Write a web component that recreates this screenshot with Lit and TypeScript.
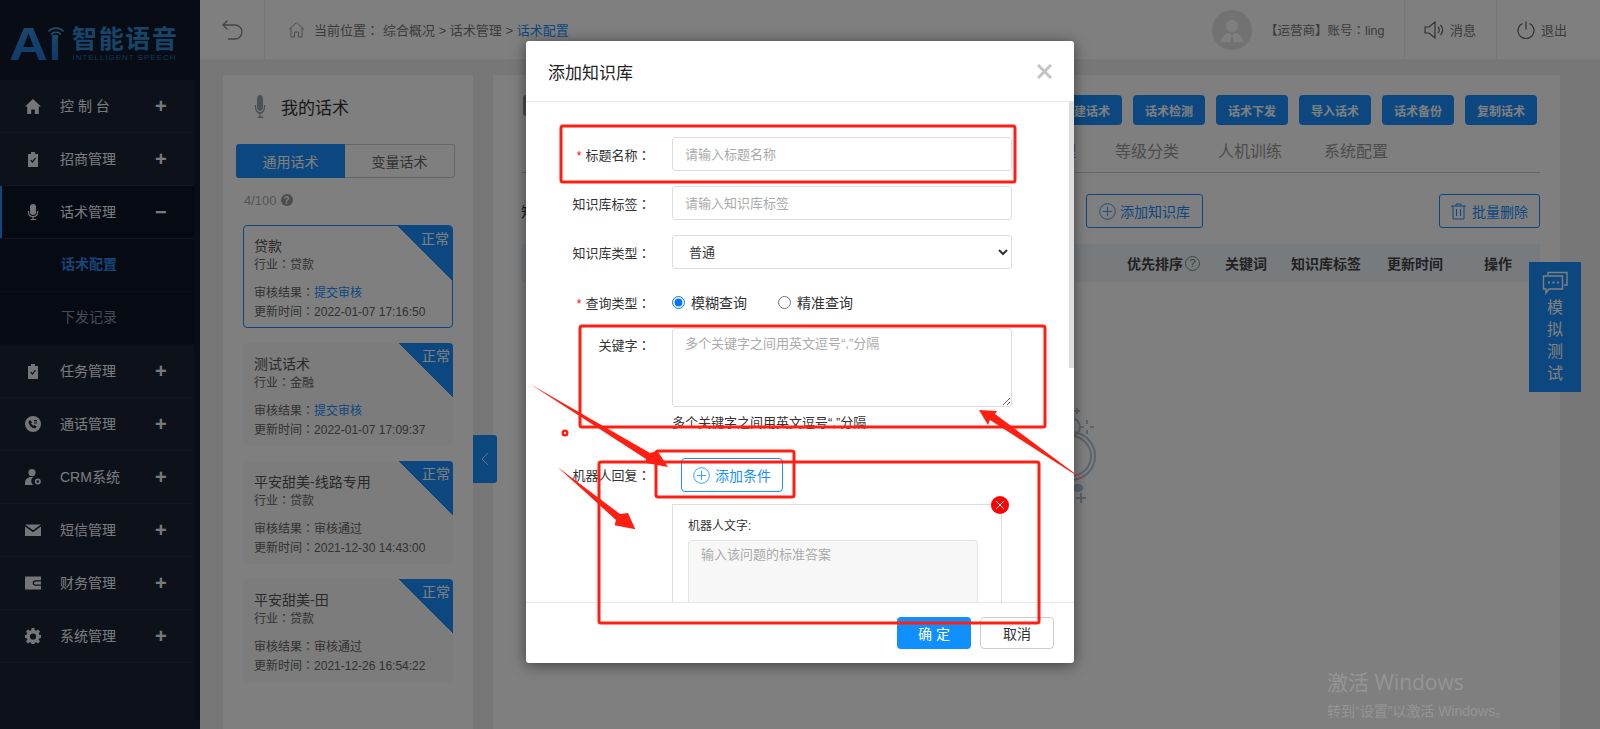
import { LitElement, html, css, svg } from "lit";
import { customElement } from "lit/decorators.js";

const icons: Record<string, unknown> = {
  home: svg`<path d="M8 1 0 8.500h2.200V16h4v-4.500h3.600V16h4V8.500H16z"/>`,
  clip: svg`<path d="M6 1h4v2h3v13H3V3h3zM5.200 9.600l2.200 2.400 3.600-4.400-1-.8-2.700 3.200-1.200-1.300z" fill-rule="evenodd"/>`,
  mic: svg`<path d="M8 0a3 3 0 0 1 3 3v5a3 3 0 0 1-6 0V3a3 3 0 0 1 3-3zM2.800 7h1.300v1a3.900 3.900 0 0 0 7.800 0V7h1.300v1a5.200 5.200 0 0 1-4.600 5.200V15h2.600v1H5.800v-1h1.600v-1.800A5.200 5.200 0 0 1 2.800 8z"/>`,
  phone: svg`<path fill-rule="evenodd" d="M8 0a8 8 0 1 1 0 16A8 8 0 0 1 8 0zM5 4 3.600 5.400c-.3 3.400 3.300 7 6.800 6.800l1.400-1.600-2.300-1.700-1 .8C7.400 9.200 6.600 8.400 6.100 7.200l.9-.9zM9 4v1.200h3V4zm0 2.400v1.200h3V6.400z"/>`,
  user: svg`<path fill-rule="evenodd" d="M7 0a3.600 3.600 0 1 1 0 7.200A3.600 3.600 0 0 1 7 0zM0 14c0-3.500 2.600-6 6-6h2.200A5 5 0 0 0 8.200 16H0zM12.800 9.500a3 3 0 1 1 0 6 3 3 0 0 1 0-6zm0 1.700a1.300 1.300 0 1 0 0 2.600 1.300 1.300 0 0 0 0-2.600z"/>`,
  mail: svg`<path d="M0 2.500h16L8 8.300zM0 4.500V14h16V4.500L8 10.300z"/>`,
  wallet: svg`<path fill-rule="evenodd" d="M0 1.500h16v3.700h-5.500a2.800 2.800 0 0 0 0 5.600H16v3.700H0zM10.500 6.500H16v3h-5.500a1.500 1.500 0 0 1 0-3z"/>`,
  gear: svg`<path fill-rule="evenodd" d="M6.600 0h2.800l.4 2.200 1.300.6 1.900-1.300 2 2-1.300 1.900.6 1.300 2.200.4v2.800l-2.200.4-.6 1.300 1.300 1.900-2 2-1.900-1.300-1.300.6-.4 2.200H6.600l-.4-2.200-1.300-.6L3 15.500l-2-2 1.300-1.900-.6-1.300L-.5 9.900V7.100l2.200-.4.6-1.300L1 3.500l2-2 1.900 1.300 1.300-.6zM8 5.400a3.100 3.100 0 1 0 0 6.200 3.100 3.100 0 0 0 0-6.200z"/>`,
};

const menu = [
  { name: "控 制 台", icon: "home", sign: "+" },
  { name: "招商管理", icon: "clip", sign: "+" },
  { name: "话术管理", icon: "mic", sign: "−", active: true },
  { sub: "话术配置", on: true },
  { sub: "下发记录" },
  { name: "任务管理", icon: "clip", sign: "+" },
  { name: "通话管理", icon: "phone", sign: "+" },
  { name: "CRM系统", icon: "user", sign: "+" },
  { name: "短信管理", icon: "mail", sign: "+" },
  { name: "财务管理", icon: "wallet", sign: "+" },
  { name: "系统管理", icon: "gear", sign: "+" },
];

const cards = [
  { t: "贷款", ind: "贷款", res: "提交审核", link: true, time: "2022-01-07 17:16:50", sel: true },
  { t: "测试话术", ind: "金融", res: "提交审核", link: true, time: "2022-01-07 17:09:37" },
  { t: "平安甜美-线路专用", ind: "贷款", res: "审核通过", time: "2021-12-30 14:43:00" },
  { t: "平安甜美-田", ind: "贷款", res: "审核通过", time: "2021-12-26 16:54:22" },
];

const FONT = css`"Liberation Sans", "Noto Sans CJK SC", sans-serif`;
const colon = html`<span class="col">：</span>`;

@customElement("app-root")
export class AppRoot extends LitElement {
  static styles = css`
    :host { display: block; position: relative; width: 1600px; height: 729px; overflow: hidden; font-family: ${FONT}; background: #eee; color: #333; }
    * { box-sizing: border-box; }
    .col { font-family: "Noto Sans CJK TC", sans-serif; }
    .page { display: flex; height: 729px; }
    aside { width: 200px; flex: none; background: #1b2234; }
    .logo { height: 80px; background: #101829; display: block; }
    .logo svg { display: block; }
    .menu { height: 640px; border-right: 6px solid #131a2b; }
    .item { height: 53px; display: flex; align-items: center; border-bottom: 1px solid #232b3e; color: #f2f5fb; font-size: 14px; padding-left: 25px; }
    .item.active { background: #0d1526; box-shadow: inset 2px 0 0 #1890ff; }
    .item svg { width: 16px; height: 16px; fill: #e8ecf4; flex: none; }
    .item .nm { margin: 0 0 2px 19px; flex: 1; }
    .item .sign { width: 39px; font-size: 20px; font-weight: 700; color: #f0f2f7; line-height: 1; }
    .sub { height: 53px; display: flex; align-items: center; padding: 0 0 4px 61px; font-size: 14px; color: #8d94a3; background: #0d1526; border-bottom: 1px solid #141c2f; }
    .sub.on { color: #2a8cf0; font-weight: 700; }
    .main { flex: 1; display: flex; flex-direction: column; min-width: 0; }
    header { height: 60px; flex: none; background: #fff; display: flex; align-items: center; font-size: 13px; color: #777; border-bottom: 1px solid #f2f2f2; }
    .back { width: 65px; height: 60px; display: flex; align-items: center; justify-content: center; border-right: 1px solid #eee; }
    .crumb { display: flex; align-items: center; margin-left: 23px; flex: 1; }
    .crumb svg { margin-right: 9px; }
    .crumb b { font-weight: 400; color: #1890ff; }
    .crumb .col { margin-right: 4px; }
    .avatar { width: 40px; height: 40px; border-radius: 50%; background: #e4e4e4; display: flex; align-items: center; justify-content: center; margin-right: 13px; overflow: hidden; }
    .acct { width: 139px; white-space: nowrap; font-size: 12.500px; }
    .hbtn { height: 60px; display: flex; align-items: center; border-left: 1px solid #eee; gap: 6px; padding-left: 19px; width: 92px; }
    .hbtn.last { width: 104px; padding-left: 20px; }
    .content { flex: 1; display: flex; gap: 20px; padding: 15px 40px 0 23px; min-height: 0; }
    .left { width: 250px; flex: none; background: #fff; position: relative; }
    .ltitle { display: flex; align-items: center; height: 34px; margin: 14px 0 0 29px; gap: 13px; font-size: 17px; color: #333; }
    .seg { display: flex; width: 219px; height: 34px; margin: 21px 0 0 13px; font-size: 14px; }
    .seg div { flex: 1; display: flex; align-items: center; justify-content: center; border: 1px solid #ccc; border-left: 0; border-radius: 0 3px 3px 0; color: #666; }
    .seg div.on { background: #1890ff; border: 0; color: #fff; border-radius: 3px 0 0 3px; }
    .count { display: flex; align-items: center; height: 18px; margin: 13px 0 0 21px; gap: 4px; font-size: 13px; color: #aaa; }
    .qm { width: 12px; height: 12px; border-radius: 50%; background: #999; color: #fff; font-size: 10px; font-weight: 700; display: flex; align-items: center; justify-content: center; }
    .cards { display: flex; flex-direction: column; gap: 15px; margin: 16px 0 0 20px; width: 210px; }
    .card { height: 103px; background: #f8f8f8; border-radius: 4px; position: relative; overflow: hidden; padding: 12px 11px; font-size: 12px; line-height: 17px; color: #666; }
    .card.sel { border: 1px solid #1890ff; background: #fff; padding: 11px 10px; }
    .card h4 { margin: 0; font-weight: 400; font-size: 14px; line-height: 18px; color: #555; }
    .card p { margin: 0; }
    .card .ind { margin-bottom: 9px; }
    .card .link { color: #1890ff; }
    .tri { position: absolute; top: 0; right: 0; width: 54px; height: 54px; background: linear-gradient(to top right, transparent 50%, #1890ff 50%); }
    .tri span { position: absolute; top: 3px; right: 3px; font-size: 14px; line-height: 20px; color: #fff; }
    .collapse { position: absolute; left: 250px; top: 360px; width: 24px; height: 48px; background: #1890ff; border-radius: 0 3px 3px 0; display: flex; align-items: center; justify-content: center; }
    .right { flex: 1; background: #fff; padding: 20px 20px 0 28px; min-width: 0; }
    .tools { display: flex; height: 30px; gap: 11px; padding-right: 3px; }
    .stub { width: 100px; height: 21px; margin-left: 2px; background: #999; border-radius: 3px; margin-right: auto; }
    .tools button { width: 72px; height: 30px; border: 0; border-radius: 4px; background: #1890ff; color: #fff; font: 700 12px ${FONT}; padding: 0; }
    .tabs { display: flex; gap: 39px; height: 48px; padding: 2px 0 0 475px; align-items: center; border-bottom: 1px solid #ccc; font-size: 16px; color: #999; }
    .tabs span:nth-child(3) { margin-right: 3px; }
    .filter { display: flex; align-items: center; height: 34px; margin-top: 21px; font-size: 14px; color: #333; }
    .filter > span { margin-right: auto; }
    .obtn { height: 34px; display: flex; align-items: center; justify-content: center; gap: 4px; border: 1px solid #1890ff; border-radius: 3px; color: #1890ff; font-size: 14px; }
    .obtn.add { width: 117px; margin-right: 236px; }
    .obtn.del { width: 101px; gap: 6px; }
    .thead { display: grid; grid-template-columns: 1fr 98px 66px 96px 97px 56px; height: 38px; margin-top: 16px; align-items: center; background: #eef7fd; font-size: 14px; font-weight: 700; color: #444; }
    .thead > div:nth-child(2) { display: flex; align-items: center; gap: 2px; }
    .qo { width: 15px; height: 15px; border: 1px solid #888; border-radius: 50%; color: #777; font-size: 11px; font-weight: 400; display: flex; align-items: center; justify-content: center; }
    .empty { display: block; margin: 123px 0 0 519px; }
    .sim { position: absolute; left: 1529px; top: 262px; width: 52px; height: 130px; background: #1890ff; color: #fff; display: flex; flex-direction: column; align-items: center; font-size: 16px; line-height: 22px; padding-top: 9px; }
    .sim svg { margin-bottom: 2px; }
    .mask { position: absolute; inset: 0; background: rgba(0, 0, 0, 0.5); }
    .wm { position: absolute; left: 1327px; top: 667px; color: #959595; }
    .wm div:first-child { font-size: 21px; line-height: 30px; font-family: "Open Sans", "Noto Sans CJK SC", sans-serif; }
    .wm div:last-child { font-size: 14px; line-height: 20px; margin-top: 4px; }
    .modal { position: absolute; left: 526px; top: 41px; width: 548px; height: 622px; background: #fff; border-radius: 3px; box-shadow: 0 2px 14px rgba(0, 0, 0, 0.5); display: flex; flex-direction: column; }
    .mh { height: 61px; flex: none; display: flex; align-items: center; justify-content: space-between; padding: 0 22px; border-bottom: 1px solid #e8e8e8; font-size: 17px; color: #222; }
    .body { flex: 1; overflow: hidden; position: relative; padding-top: 35px; min-height: 0; }
    .bar { position: absolute; right: 0; top: 0; width: 5px; height: 266px; background: #ddd; }
    .row { display: grid; grid-template-columns: 124.500px 340px; column-gap: 21.500px; font-size: 13px; color: #333; align-items: center; }
    .row + .row { margin-top: 15px; }
    .lb { text-align: right; white-space: nowrap; }
    .lb i { color: #f00; font-style: normal; font-size: 12px; margin-right: 4px; }
    .ctl { width: 340px; height: 34px; border: 1px solid #ddd; border-radius: 3px; background: #fff; padding: 0 12px; font: 13px ${FONT}; color: #333; outline: none; display: block; }
    .ctl::placeholder, textarea::placeholder { color: #aaa; opacity: 1; }
    .radios { display: flex; align-items: center; height: 34px; font-size: 14px; }
    .radios input { margin: 0 6px 0 0; width: 13px; height: 13px; }
    .radios label { display: flex; align-items: center; margin-right: 31px; }
    .row.kw { margin-top: 9px; align-items: start; }
    .row.kw .lb { padding-top: 7px; }
    .row.kw textarea { height: 79px; padding: 4px 12px; }
    .hint { font-size: 13px; line-height: 20px; margin-top: 6px; color: #333; }
    .row.rb { margin-top: 25px; }
    .row.rb .lb { padding-bottom: 2px; }
    .cond { width: 102px; height: 34px; margin-left: 9px; display: flex; align-items: center; justify-content: center; gap: 5px; border: 1px solid #1890ff; border-radius: 4px; color: #1890ff; font-size: 14px; }
    .answer { margin: 12px 0 0 146px; width: 330px; height: 240px; border: 1px solid #ddd; border-bottom: 0; padding: 11px 15px 0; position: relative; font-size: 12px; color: #333; }
    .answer textarea { display: block; width: 290px; height: 200px; margin-top: 7px; border: 1px solid #e4e4e4; border-radius: 3px; background: #f7f7f7; padding: 3px 12px; font: 13px ${FONT}; resize: none; outline: none; }
    .xdot { position: absolute; right: -8px; top: -9px; width: 18px; height: 18px; }
    .mf { height: 61px; flex: none; border-top: 1px solid #e8e8e8; display: flex; justify-content: flex-end; gap: 9px; padding: 14px 20px 0 0; }
    .mf button { width: 74px; height: 32px; border-radius: 4px; font: 14px ${FONT}; padding: 0; }
    .ok { background: #1090ff; color: #fff; border: 0; }
    .no { background: #fff; color: #333; border: 1px solid #ccc; }
    .marks { position: absolute; left: 0; top: 0; pointer-events: none; }
  `;

  private plus(size: number, stroke: string) {
    return html`<svg width=${size} height=${size} viewBox="0 0 20 20" fill="none" stroke=${stroke}>
      <circle cx="10" cy="10" r="9.200"/><path d="M10 4.500v11M4.500 10h11"/>
    </svg>`;
  }

  render() {
    return html`
      <div class="page">
        <aside>
          <div class="logo">
            <svg width="200" height="80" viewBox="0 0 200 80">
              <defs>
                <linearGradient id="lg" x1="0" y1="0" x2="0" y2="1">
                  <stop offset="0" stop-color="#3f95d8"/><stop offset="1" stop-color="#1472d8"/>
                </linearGradient>
              </defs>
              <text x="9" y="60" fill="url(#lg)" font-family="Liberation Sans" font-weight="700" font-size="46" textLength="39" lengthAdjust="spacingAndGlyphs">A</text>
              <text x="49" y="60" fill="url(#lg)" font-family="Liberation Sans" font-weight="700" font-size="46" textLength="12" lengthAdjust="spacingAndGlyphs">ı</text>
              <g fill="none" stroke="#3f9ad8" stroke-width="1.600">
                <path d="M48.500 31.500a10 10 0 0 1 15 0M51 34.500a6.500 6.500 0 0 1 10 0"/>
              </g>
              <circle cx="56" cy="37" r="1.500" fill="#3f9ad8"/>
              <text x="72" y="48" fill="#2f8ad2" font-family="Noto Sans CJK SC" font-weight="700" font-size="25" textLength="105">智能语音</text>
              <text x="72.500" y="60" fill="#1c70bd" font-family="Liberation Sans" font-size="8" textLength="103">INTELLIGENT SPEECH</text>
            </svg>
          </div>
          <div class="menu">
            ${menu.map((m) =>
              m.sub
                ? html`<div class="sub ${m.on ? "on" : ""}">${m.sub}</div>`
                : html`<div class="item ${m.active ? "active" : ""}">
                    <svg viewBox="0 0 16 16">${icons[m.icon as string]}</svg>
                    <span class="nm">${m.name}</span>
                    <span class="sign">${m.sign}</span>
                  </div>`
            )}
          </div>
        </aside>
        <div class="main">
          <header>
            <div class="back">
              <svg width="22" height="22" viewBox="0 0 22 22" fill="none" stroke="#888" stroke-width="1.300">
                <path d="M6.500 1.500 2 6l4.500 4.500M2 6h12a6.500 6.500 0 0 1 0 14H7"/>
              </svg>
            </div>
            <div class="crumb">
              <svg width="17" height="17" viewBox="0 0 17 17" fill="none" stroke="#999"><path d="M1 8.500 8.500 1.500 16 8.500M3 7v9h3.500v-5h4v5H14V7"/></svg>
              <span>当前位置${colon}综合概况 &gt; 话术管理 &gt; <b>话术配置</b></span>
            </div>
            <div class="avatar">
              <svg width="26" height="26" viewBox="0 0 26 26" fill="#fff"><circle cx="13" cy="9" r="6"/><path d="M2 25c0-6 4-8 8-9l3 3 3-3c4 1 8 3 8 9z"/><path d="M12 20h2l.5 5h-3z" fill="#e4e4e4"/></svg>
            </div>
            <div class="acct">【运营商】账号${colon}ling</div>
            <div class="hbtn">
              <svg width="20" height="18" viewBox="0 0 20 18" fill="none" stroke="#666" stroke-width="1.200"><path d="M1 6h4l6-5v16l-6-5H1zM14 6a4 4 0 0 1 0 6M16.500 4a7 7 0 0 1 0 10"/></svg>
              <span>消息</span>
            </div>
            <div class="hbtn last">
              <svg width="18" height="18" viewBox="0 0 18 18" fill="none" stroke="#666" stroke-width="1.200"><path d="M5.500 2.500a8 8 0 1 0 7 0M9 .5v8"/></svg>
              <span>退出</span>
            </div>
          </header>
          <div class="content">
            <section class="left">
              <div class="ltitle">
                <svg width="16" height="23" viewBox="0 0 16 16" preserveAspectRatio="none" fill="#9aa3b2">${icons.mic}</svg>
                <span>我的话术</span>
              </div>
              <div class="seg"><div class="on">通用话术</div><div>变量话术</div></div>
              <div class="count"><span>4/100</span><span class="qm">?</span></div>
              <div class="cards">
                ${cards.map(
                  (c) => html`<div class="card ${c.sel ? "sel" : ""}">
                    <div class="tri"><span>正常</span></div>
                    <h4>${c.t}</h4>
                    <p class="ind">行业${colon}${c.ind}</p>
                    <p>审核结果${colon}<span class=${c.link ? "link" : ""}>${c.res}</span></p>
                    <p>更新时间${colon}${c.time}</p>
                  </div>`
                )}
              </div>
              <div class="collapse">
                <svg width="8" height="14" viewBox="0 0 8 14" fill="none" stroke="#fff" stroke-opacity=".75"><path d="M7 1 1 7l6 6"/></svg>
              </div>
            </section>
            <section class="right">
              <div class="tools">
                <div class="stub"></div>
                ${["新建话术", "话术检测", "话术下发", "导入话术", "话术备份", "复制话术"].map((b) => html`<button>${b}</button>`)}
              </div>
              <div class="tabs"><span>知识库管理</span><span>等级分类</span><span>人机训练</span><span>系统配置</span></div>
              <div class="filter">
                <span>知识</span>
                <div class="obtn add">${this.plus(17, "#1890ff")}添加知识库</div>
                <div class="obtn del">
                  <svg width="15" height="17" viewBox="0 0 15 17" fill="none" stroke="#1890ff"><path d="M0 3h15M5 3V1h5v2M2 3v13h11V3M5.500 6v7M9.500 6v7"/></svg>
                  <span>批量删除</span>
                </div>
              </div>
              <div class="thead">
                <div></div>
                <div>优先排序<span class="qo">?</span></div>
                <div>关键词</div><div>知识库标签</div><div>更新时间</div><div>操作</div>
              </div>
              <svg class="empty" width="60" height="100" viewBox="0 0 60 100" fill="none" stroke="#b6c4d2" stroke-width="2">
                <circle cx="31" cy="51" r="24"/><circle cx="31" cy="51" r="20"/>
                <circle cx="31" cy="22" r="9"/>
                <path d="M47 15v4M47 25v4M40 22h4M50 22h4M37 3v6M34 6h6M41 88v10M36 93h10"/>
                <ellipse cx="38" cy="83" rx="5" ry="4" fill="#b6c4d2" stroke="none"/>
              </svg>
            </section>
          </div>
        </div>
      </div>
      <div class="sim">
        <svg width="26" height="24" viewBox="0 0 26 24" fill="none" stroke="#fff" stroke-width="1.400">
          <path d="M6 4V1.500h19V14h-3M1.500 5h19v13H7l-3 4v-4H1.500z"/>
          <path d="M6 11.500h2M10.500 11.500h2M15 11.500h2" stroke-width="2"/>
        </svg>
        <span>模</span><span>拟</span><span>测</span><span>试</span>
      </div>
      <div class="mask"></div>
      <div class="wm"><div>激活 Windows</div><div>转到“设置”以激活 Windows。</div></div>
      <div class="modal">
        <div class="mh">
          <span>添加知识库</span>
          <svg width="15" height="15" viewBox="0 0 15 15" stroke="#c4c4c4" stroke-width="3"><path d="M1 1l13 13M14 1 1 14"/></svg>
        </div>
        <div class="body">
          <div class="bar"></div>
          <div class="row"><div class="lb"><i>*</i>标题名称${colon}</div><input class="ctl" placeholder="请输入标题名称" /></div>
          <div class="row"><div class="lb">知识库标签${colon}</div><input class="ctl" placeholder="请输入知识库标签" /></div>
          <div class="row"><div class="lb">知识库类型${colon}</div><select class="ctl"><option>普通</option></select></div>
          <div class="row" style="margin-top:16px">
            <div class="lb"><i>*</i>查询类型${colon}</div>
            <div class="radios">
              <label><input type="radio" name="q" checked />模糊查询</label>
              <label><input type="radio" name="q" />精准查询</label>
            </div>
          </div>
          <div class="row kw">
            <div class="lb">关键字${colon}</div>
            <div>
              <textarea class="ctl" placeholder="多个关键字之间用英文逗号“,”分隔"></textarea>
              <div class="hint">多个关键字之间用英文逗号“,”分隔</div>
            </div>
          </div>
          <div class="row rb">
            <div class="lb">机器人回复${colon}</div>
            <div class="cond">${this.plus(17, "#1890ff")}添加条件</div>
          </div>
          <div class="answer">
            <svg class="xdot" viewBox="0 0 18 18"><circle cx="9" cy="9" r="9" fill="#f00"/><path d="M5 5l8 8M13 5l-8 8" stroke="#fff"/></svg>
            <div>机器人文字:</div>
            <textarea placeholder="输入该问题的标准答案"></textarea>
          </div>
        </div>
        <div class="mf"><button class="ok">确 定</button><button class="no">取消</button></div>
      </div>
      <svg class="marks" width="1600" height="729" viewBox="0 0 1600 729" fill="none" stroke="#ff1e12" stroke-width="3">
        <rect x="561" y="126" width="454" height="56" rx="2"/>
        <rect x="580" y="326" width="465" height="101" rx="2"/>
        <rect x="656" y="451" width="138" height="46" rx="2"/>
        <rect x="599" y="462" width="440" height="161" rx="2"/>
        <g fill="#ff1e12" stroke="none">
          <path fill-rule="evenodd" d="M565 429.500a3.500 3.500 0 1 1 0 7 3.500 3.500 0 0 1 0-7zm0 2.500a1 1 0 1 0 0 2 1 1 0 0 0 0-2z"/>
          <polygon points="530,384 650,453 657.500,451 668,467 646,463 646,459"/>
          <polygon points="557.500,467 620,514 628,513 635.400,529.300 614.600,525.300 616,520"/>
          <polygon points="1085,481 995,414 997,411 979,410 988,425 990,420"/>
        </g>
      </svg>
    `;
  }
}
